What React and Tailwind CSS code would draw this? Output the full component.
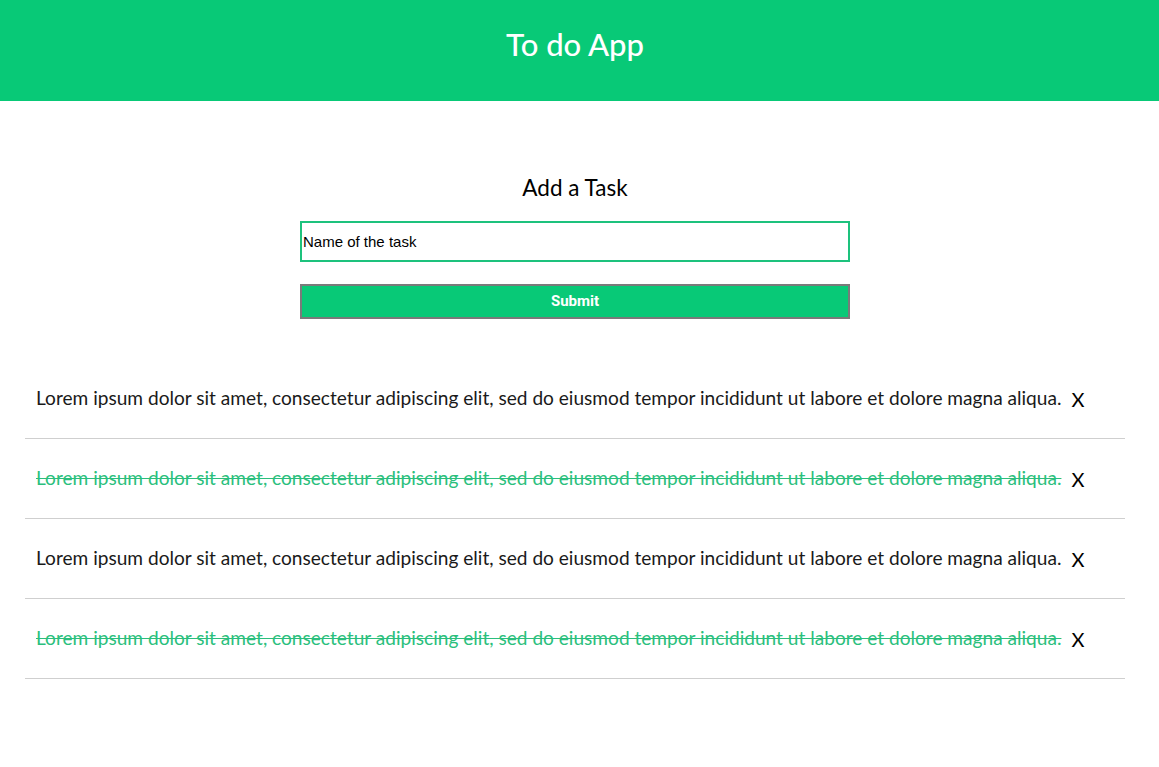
import React from "react";

const LOREM =
  "Lorem ipsum dolor sit amet, consectetur adipiscing elit, sed do eiusmod tempor incididunt ut labore et dolore magna aliqua.";

const tasks = [
  { text: LOREM, done: false },
  { text: LOREM, done: true },
  { text: LOREM, done: false },
  { text: LOREM, done: true },
];

export default function App() {
  return (
    <div className="min-h-[767px] bg-white" style={{ fontFamily: "Lato, 'Open Sans', sans-serif" }}>
      <header className="h-[101px] bg-[#08c977]">
        <div className="w-[1150px] h-full flex items-center justify-center">
          <h1 className="text-white text-[31px] font-medium leading-none pb-[13px]">To do App</h1>
        </div>
      </header>
      <div className="w-[1150px]">
        <main className="flex flex-col items-center pt-[75px]">
          <h2 className="text-[22.5px] text-black leading-[24px]">Add a Task</h2>
          <form className="w-[550px] flex flex-col mt-[21px]" onSubmit={(e) => e.preventDefault()}>
            <input
              type="text"
              defaultValue="Name of the task"
              className="h-[41px] border-2 border-[#1dc27d] px-[1px] text-[15px] text-black outline-none"
              style={{ fontFamily: "'Liberation Sans', Arial, sans-serif" }}
            />
            <button
              type="submit"
              className="mt-[22px] h-[35px] bg-[#08c977] border-2 border-[#7a7a7a] text-white text-[15px] font-bold"
              style={{ fontFamily: "Roboto, 'Liberation Sans', sans-serif" }}
            >
              Submit
            </button>
          </form>
        </main>
        <ul className="mx-[25px] mt-[40px]">
          {tasks.map((t, i) => (
            <li key={i} className="h-[80px] border-b border-[#cfcfcf] flex items-center px-[11px] gap-[10px]">
              <span
                className={
                  t.done
                    ? "text-[19.1px] text-[#2bbf7d] line-through"
                    : "text-[19.1px] text-[#1a1a1a]"
                }
              >
                {t.text}
              </span>
              <span className="text-[20px] text-black">X</span>
            </li>
          ))}
        </ul>
      </div>
    </div>
  );
}
